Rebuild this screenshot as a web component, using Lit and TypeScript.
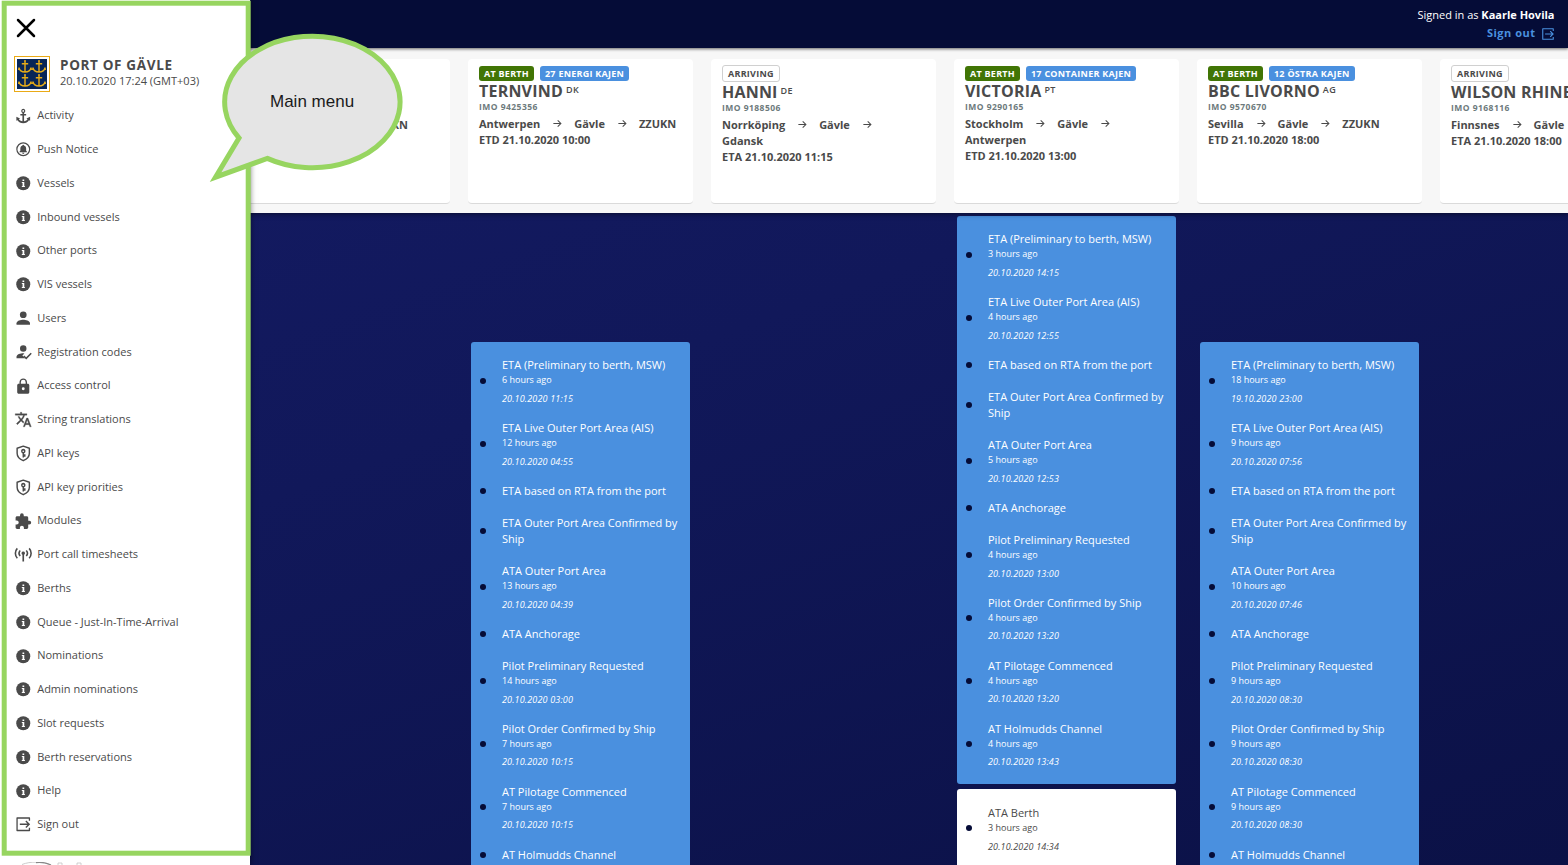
import { LitElement, html, svg, css, nothing } from "lit";
import { customElement, property } from "lit/decorators.js";

const ICONS: Record<string, unknown> = {
  info: svg`<circle cx="12" cy="12" r="10.2"/><path fill="#fff" d="M10.9 6.4h2.500v2.300h-2.500zM9.900 10.300h3.600v5.700h.9v1.500H9.900v-1.500h1.100v-4.200H9.900z"/>`,
  anchor: svg`<path fill-rule="evenodd" d="M12 1.2a3.1 3.1 0 0 1 1.2 5.9v1.7h3v2h-3v8.6c2.4-.3 4.3-1.3 5-2.9l-1.500-1.200 5.300-2.600v6l-1.700-.9c-1.500 2.900-4.700 4.300-8.300 4.300s-6.800-1.400-8.300-4.300l-1.700.9v-6l5.300 2.600-1.500 1.200c.7 1.600 2.600 2.600 5 2.900v-8.600h-3v-2h3V7.100A3.100 3.100 0 0 1 12 1.200zm0 1.800a1.300 1.300 0 1 0 0 2.600 1.300 1.300 0 0 0 0-2.600z"/>`,
  bell: svg`<circle cx="12" cy="12" r="9.300" fill="none" stroke="currentColor" stroke-width="1.700"/><path d="M12 5.500c.8 0 1.200.5 1.200 1.200 1.900.6 3 2.200 3 4.300v3.200l1.300 1.500v.8h-11v-.8l1.300-1.500V11c0-2.100 1.100-3.700 3-4.300 0-.7.400-1.200 1.200-1.200zM10.400 17.200h3.200c0 1-.7 1.600-1.600 1.600s-1.600-.6-1.600-1.600z"/>`,
  user: svg`<circle cx="12" cy="6.900" r="4.900"/><path d="M2.200 21.500v-2.200c0-3.600 6.500-5.200 9.800-5.200s9.800 1.600 9.800 5.200v2.200z"/>`,
  userCheck: svg`<circle cx="12" cy="6.500" r="4.700"/><path d="M2.200 20.800v-2.200c0-3.500 6.200-5.100 9.500-5.100l2 .2-3 3 4 4.100z"/><path d="M12.700 17.500l3.600 3.400 7.300-7.400" fill="none" stroke="currentColor" stroke-width="2.200"/>`,
  lock: svg`<path fill-rule="evenodd" d="M18.500 8.500h-1V6.200C17.500 3.200 15 .8 12 .8S6.500 3.200 6.500 6.200v2.300h-1c-1.300 0-2.300 1-2.300 2.200v10c0 1.200 1 2.200 2.300 2.200h13c1.300 0 2.300-1 2.300-2.200v-10c0-1.200-1-2.200-2.300-2.200zM12 17.800a2.100 2.100 0 1 1 0-4.200 2.100 2.100 0 0 1 0 4.200zm3.500-9.300h-7V6.200a3.500 3.500 0 0 1 7 0z"/>`,
  translate: svg`<path d="M12.870 15.070l-2.540-2.510.03-.03A17.520 17.520 0 0 0 14.070 6H17V4h-7V2H8v2H1v2h11.170C11.500 7.920 10.440 9.750 9 11.350 8.070 10.320 7.300 9.190 6.690 8h-2c.73 1.630 1.730 3.170 2.980 4.560l-5.090 5.020L4 19l5-5 3.110 3.110.76-2.040zM18.500 10h-2L12 22h2l1.120-3h4.750L21 22h2l-4.500-12zm-2.620 7l1.620-4.330L19.120 17h-3.240z" transform="matrix(1.060 0 0 1.060 -.7 -.3)" stroke="currentColor" stroke-width=".4"/>`,
  shieldKey: svg`<path d="M12 1.700l8.900 3v7.200c0 5-3.700 8.700-8.900 10.900-5.200-2.200-8.900-5.900-8.900-10.900V4.700z" fill="none" stroke="currentColor" stroke-width="2.100" stroke-linejoin="round"/><path fill-rule="evenodd" d="M12 5.600a3.400 3.400 0 0 1 1.100 6.600v1.300h2.200v3.700h-2.200v1H11v-6A3.400 3.400 0 0 1 12 5.600zm0 2.300a1.200 1.200 0 1 0 0 2.400 1.200 1.200 0 0 0 0-2.400z"/>`,
  puzzle: svg`<path d="M20.500 11H19V7c0-1.100-.9-2-2-2h-4V3.500a2.500 2.500 0 0 0-5 0V5H4c-1.100 0-1.990.9-1.990 2v3.800H3.500c1.490 0 2.700 1.210 2.700 2.700s-1.210 2.700-2.700 2.700H2V20c0 1.100.9 2 2 2h3.800v-1.500c0-1.490 1.210-2.700 2.700-2.700s2.700 1.210 2.700 2.700V22H17c1.100 0 2-.9 2-2v-4h1.500a2.500 2.500 0 0 0 0-5z" transform="matrix(1.080 0 0 1.080 -1.300 -.6)"/>`,
  antenna: svg`<g fill="none" stroke="currentColor" stroke-width="2.300"><path d="M3.400 3.400a10.500 10.500 0 0 0 0 14.400M20.600 3.400a10.500 10.500 0 0 1 0 14.400M7.600 6.600a6 6 0 0 0 0 8M16.400 6.600a6 6 0 0 1 0 8"/></g><path d="M12 8a2.500 2.500 0 0 1 1.200 4.700V22.500h-2.400v-9.800A2.500 2.500 0 0 1 12 8z"/>`,
  signOut: svg`<path d="M21 7V2.900H3v18.200h18V17" fill="none" stroke="currentColor" stroke-width="1.900" stroke-linejoin="round"/><path d="M7 12h13.500M15.800 7.200l4.800 4.800-4.800 4.800" fill="none" stroke="currentColor" stroke-width="2"/>`,
  arrow: svg`<path d="M1 12h20M12.500 3.500l8.500 8.500-8.500 8.500" fill="none" stroke="currentColor" stroke-width="2.800"/>`,
};

const MENU: [string, string][] = [
  ["anchor", "Activity"],
  ["bell", "Push Notice"],
  ["info", "Vessels"],
  ["info", "Inbound vessels"],
  ["info", "Other ports"],
  ["info", "VIS vessels"],
  ["user", "Users"],
  ["userCheck", "Registration codes"],
  ["lock", "Access control"],
  ["translate", "String translations"],
  ["shieldKey", "API keys"],
  ["shieldKey", "API key priorities"],
  ["puzzle", "Modules"],
  ["antenna", "Port call timesheets"],
  ["info", "Berths"],
  ["info", "Queue - Just-In-Time-Arrival"],
  ["info", "Nominations"],
  ["info", "Admin nominations"],
  ["info", "Slot requests"],
  ["info", "Berth reservations"],
  ["info", "Help"],
  ["signOut", "Sign out"],
];

interface Ship {
  berth?: string;
  name: string;
  flag: string;
  imo: string;
  route: string[];
  eta: string;
}

const SHIPS: Ship[] = [
  { name: "", flag: "", imo: "", route: ["ZZUKN"], eta: "" },
  { berth: "27 ENERGI KAJEN", name: "TERNVIND", flag: "DK", imo: "IMO 9425356", route: ["Antwerpen", "Gävle", "ZZUKN"], eta: "ETD 21.10.2020 10:00" },
  { name: "HANNI", flag: "DE", imo: "IMO 9188506", route: ["Norrköping", "Gävle", "Gdansk"], eta: "ETA 21.10.2020 11:15" },
  { berth: "17 CONTAINER KAJEN", name: "VICTORIA", flag: "PT", imo: "IMO 9290165", route: ["Stockholm", "Gävle", "Antwerpen"], eta: "ETD 21.10.2020 13:00" },
  { berth: "12 ÖSTRA KAJEN", name: "BBC LIVORNO", flag: "AG", imo: "IMO 9570670", route: ["Sevilla", "Gävle", "ZZUKN"], eta: "ETD 21.10.2020 18:00" },
  { name: "WILSON RHINE", flag: "", imo: "IMO 9168116", route: ["Finnsnes", "Gävle"], eta: "ETA 21.10.2020 18:00" },
];

type Event = [string, string?, string?];
interface Lane {
  offset: number;
  done: Event[];
  next?: Event[];
}

const steps = (t: string[]): Event[] => [
  ["ETA (Preliminary to berth, MSW)", t[0], t[1]],
  ["ETA Live Outer Port Area (AIS)", t[2], t[3]],
  ["ETA based on RTA from the port"],
  ["ETA Outer Port Area Confirmed by Ship"],
  ["ATA Outer Port Area", t[4], t[5]],
  ["ATA Anchorage"],
  ["Pilot Preliminary Requested", t[6], t[7]],
  ["Pilot Order Confirmed by Ship", t[8], t[9]],
  ["AT Pilotage Commenced", t[10], t[11]],
  ["AT Holmudds Channel", t[12], t[13]],
];

const LANES: (Lane | null)[] = [
  null,
  {
    offset: 129,
    done: steps(["6 hours ago", "20.10.2020 11:15", "12 hours ago", "20.10.2020 04:55", "13 hours ago", "20.10.2020 04:39", "14 hours ago", "20.10.2020 03:00", "7 hours ago", "20.10.2020 10:15", "7 hours ago", "20.10.2020 10:15"]),
  },
  null,
  {
    offset: 3,
    done: steps(["3 hours ago", "20.10.2020 14:15", "4 hours ago", "20.10.2020 12:55", "5 hours ago", "20.10.2020 12:53", "4 hours ago", "20.10.2020 13:00", "4 hours ago", "20.10.2020 13:20", "4 hours ago", "20.10.2020 13:20", "4 hours ago", "20.10.2020 13:43"]),
    next: [["ATA Berth", "3 hours ago", "20.10.2020 14:34"]],
  },
  {
    offset: 129,
    done: steps(["18 hours ago", "19.10.2020 23:00", "9 hours ago", "20.10.2020 07:56", "10 hours ago", "20.10.2020 07:46", "9 hours ago", "20.10.2020 08:30", "9 hours ago", "20.10.2020 08:30", "9 hours ago", "20.10.2020 08:30"]),
  },
  null,
];

@customElement("ui-icon")
class UiIcon extends LitElement {
  @property() name = "info";
  static styles = css`
    :host { display: inline-block; width: 16.500px; height: 16.500px; }
    svg { display: block; width: 100%; height: 100%; overflow: visible; }
  `;
  render() {
    return html`<svg viewBox="0 0 24 24" fill="currentColor">${ICONS[this.name]}</svg>`;
  }
}

@customElement("side-menu")
class SideMenu extends LitElement {
  static styles = css`
    :host { display: flex; flex-direction: column; box-sizing: border-box; width: 250px; height: 865px; padding: 18px 14px 0; background: #fff; color: #4a4a4a; box-shadow: 0 0 6px rgba(0,0,0,.6); overflow: hidden; }
    .close { display: block; width: 18px; height: 18px; margin-left: 3px; margin-bottom: 20px; overflow: visible; }
    .port { display: flex; gap: 10px; height: 36px; }
    .crest { width: 36px; height: 36px; flex: none; }
    .name { font-size: 13.500px; font-weight: 700; line-height: 18px; letter-spacing: .65px; white-space: nowrap; }
    .time { font-size: 11px; line-height: 15px; margin-top: -1px; white-space: nowrap; }
    .list { display: flex; flex-direction: column; margin-top: 6.450px; }
    .item { display: flex; align-items: center; height: 33.760px; font-size: 11px; white-space: nowrap; gap: 6px; }
    .item ui-icon { margin-left: .5px; margin-right: .2px; margin-top: 1px; }
    .item span { margin-top: -1px; }
    .brand { display: block; flex: none; width: 110px; height: 20px; margin-top: 21px; }
  `;
  render() {
    const anchor = (x: number, y: number) => svg`<g transform="translate(${x} ${y})"><path d="M0-5V5.500M-3.200-2.800H3.200M-6 1.200C-5 7 5 7 6 1.200M-6 1.200l-.3 2.300M6 1.200l.3 2.300" fill="none" stroke="#e7ac18" stroke-width="1.400"/><circle cy="-5.400" r="1" fill="#e7ac18"/></g>`;
    return html`
      <svg class="close" viewBox="0 0 18 18"><path d="M1 2l16 16M17 2L1 18" stroke="#000" stroke-width="2.500" stroke-linecap="round"/></svg>
      <div class="port">
        <svg class="crest" viewBox="0 0 36 36">
          <rect x=".5" y=".5" width="35" height="35" fill="#fff" stroke="#eaaa16"/>
          <rect x="3" y="3" width="30" height="30" fill="#072557"/>
          ${anchor(11, 10.5)}${anchor(25, 10.5)}${anchor(11, 24.5)}${anchor(25, 24.5)}
        </svg>
        <div><div class="name">PORT OF GÄVLE</div><div class="time">20.10.2020 17:24 (GMT+03)</div></div>
      </div>
      <div class="list">
        ${MENU.map(([i, t]) => html`<div class="item"><ui-icon name=${i}></ui-icon><span>${t}</span></div>`)}
      </div>
      <svg class="brand" viewBox="0 0 110 20"><path d="M8 2.500C16-.8 30-.8 37 3" fill="none" stroke="#ccc" stroke-width="1"/><path d="M22 .6C28 0 33 1 37 3" fill="none" stroke="#888" stroke-width="1.300"/><path d="M44 8V1h4V8M63 8V1h4V8" fill="none" stroke="#c4c4c4" stroke-width=".8"/></svg>
    `;
  }
}

@customElement("ship-card")
class ShipCard extends LitElement {
  @property({ attribute: false }) ship!: Ship;
  static styles = css`
    :host { display: block; box-sizing: border-box; width: 225px; height: 145px; flex: none; padding: 7px 15px 0 11px; background: #fff; border-radius: 4px; border-bottom: 1px solid #dadada; color: #4a4a4a; }
    .badges { display: flex; gap: 6px; }
    .badge { box-sizing: border-box; height: 15px; line-height: 15px; padding: 0 5px; border-radius: 3px; color: #fff; font-size: 9px; font-weight: 700; letter-spacing: .26px; white-space: nowrap; }
    .green { background: #417505; }
    .blue { background: #4a90df; }
    .plain { height: 17px; margin-top: -1px; background: #fff; color: #4a4a4a; border: 1px solid #d0d0d0; }
    .name { font-size: 16px; font-weight: 700; line-height: 20px; height: 20px; letter-spacing: .2px; white-space: nowrap; }
    .flag { font-size: 9px; font-weight: 600; letter-spacing: .4px; vertical-align: 4px; line-height: 1; margin-left: 3px; }
    .imo { font-size: 8.500px; font-weight: 700; line-height: 12px; letter-spacing: .46px; color: #6d7a7c; }
    .route { margin-top: 3px; font-size: 11px; font-weight: 700; line-height: 16px; }
    .route ui-icon { width: 9px; height: 9px; margin: 0 12px 0 13px; }
    .only { margin-top: 51px; padding-right: 27px; text-align: right; }
  `;
  render() {
    const s = this.ship;
    if (!s.name) return html`<div class="route only">${s.route[0]}</div>`;
    return html`
      <div class="badges">
        ${s.berth
          ? html`<span class="badge green">AT BERTH</span><span class="badge blue">${s.berth}</span>`
          : html`<span class="badge plain">ARRIVING</span>`}
      </div>
      <div class="name">${s.name}<span class="flag">${s.flag}</span></div>
      <div class="imo">${s.imo}</div>
      <div class="route">
        <span>${s.route[0]}</span>${s.route.slice(1).map((r) => html`<ui-icon name="arrow"></ui-icon><wbr><span>${r}</span>`)}
        <div>${s.eta}</div>
      </div>
    `;
  }
}

@customElement("event-panel")
class EventPanel extends LitElement {
  @property({ attribute: false }) events: Event[] = [];
  static styles = css`
    :host { display: block; width: 219px; box-sizing: border-box; padding-top: 15.300px; border-radius: 3px; background: #4a90df; color: #fff; }
    :host([light]) { background: #fff; color: #4a4a4a; padding-top: 16px; }
    .event { display: flex; align-items: center; padding: 0 8px 0 9px; margin-bottom: 16px; }
    .dot { width: 6px; height: 6px; flex: none; border-radius: 50%; background: #050c37; margin-right: 16px; }
    .title { font-size: 11px; line-height: 16px; }
    .ago { font-size: 9px; line-height: 13px; }
    .date { font-size: 9px; font-style: italic; line-height: 18px; height: 17.900px; padding-top: 3.600px; box-sizing: border-box; letter-spacing: .15px; }
  `;
  render() {
    return this.events.map(([t, ago, date]) => html`
      <div class="event"><div class="dot"></div><div>
        <div class="title">${t}</div>
        ${ago ? html`<div class="ago">${ago}</div><div class="date">${date}</div>` : nothing}
      </div></div>`);
  }
}

@customElement("app-root")
class AppRoot extends LitElement {
  static styles = css`
    :host { display: flex; position: relative; width: 1568px; height: 865px; overflow: hidden; font-family: "Open Sans", "Noto Sans", sans-serif; background: #0e1554; }
    side-menu { flex: none; z-index: 2; }
    .main { flex: 1; min-width: 0; height: 865px; display: flex; flex-direction: column; margin-left: -25px; background: linear-gradient(160deg, #141b64 0%, #11185a 38%, #0b1146 100%); }
    .header { flex: none; box-sizing: border-box; height: 48px; background: #050c37; color: #fff; display: flex; flex-direction: column; align-items: flex-end; padding: 6px 13.500px 0 0; font-size: 11px; line-height: 17px; box-shadow: 0 1px 3px rgba(0,0,0,.6); z-index: 1; }
    .out { display: flex; align-items: center; gap: 5px; height: 19px; color: #4a90df; font-weight: 700; font-size: 11px; letter-spacing: .5px; }
    .out ui-icon { width: 14px; height: 14px; margin-top: 3px; }
    .ships { flex: none; box-sizing: border-box; height: 165px; padding-top: 11px; background: #f7f7f7; display: flex; gap: 18px; box-shadow: 0 1px 5px rgba(0,0,0,.5); position: relative; }
    .lanes { display: flex; gap: 24px; padding-left: 3px; height: 652px; overflow: hidden; }
    .lane { width: 219px; flex: none; display: flex; flex-direction: column; gap: 5.400px; }
    .notes { position: absolute; left: 0; top: 0; z-index: 3; pointer-events: none; }
    .label { font: 17px "Liberation Sans", Arial, sans-serif; fill: #1a1a1a; }
  `;
  render() {
    return html`
      <side-menu></side-menu>
      <div class="main">
        <div class="header">
          <div>Signed in as <b>Kaarle Hovila</b></div>
          <div class="out"><span>Sign out</span><ui-icon name="signOut"></ui-icon></div>
        </div>
        <div class="ships">${SHIPS.map((s) => html`<ship-card .ship=${s}></ship-card>`)}</div>
        <div class="lanes">
          ${LANES.map((l) => html`<div class="lane" style="padding-top:${l ? l.offset : 0}px">
            ${l ? html`<event-panel .events=${l.done}></event-panel>` : nothing}
            ${l && l.next ? html`<event-panel light .events=${l.next}></event-panel>` : nothing}
          </div>`)}
        </div>
      </div>
      <svg class="notes" width="1568" height="865">
        <g stroke="#97d560" stroke-width="5">
          <rect x="4.200" y="3.200" width="244" height="850" fill="none"/>
          <path d="M239 138A87.700 65.800 0 1 1 267.300 158.400L215.500 177.200Z" fill="#e5e5e5" stroke-miterlimit="10"/>
        </g>
        <text class="label" x="270" y="107.300">Main menu</text>
      </svg>
    `;
  }
}
